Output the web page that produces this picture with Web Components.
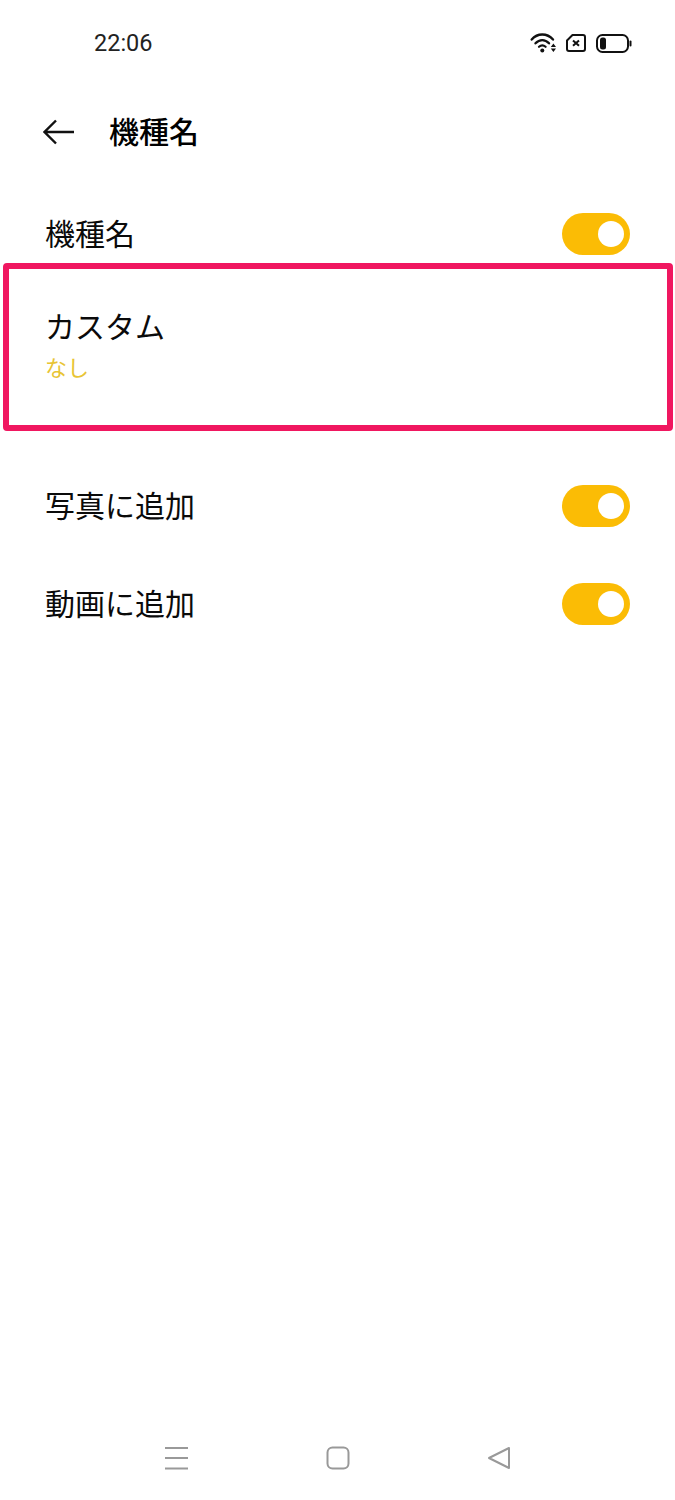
<!DOCTYPE html>
<html lang="ja">
<head>
<meta charset="utf-8">
<title>機種名</title>
<style>
    html, body { margin: 0; background: #fff; }
    body { font-family: "Noto Sans CJK JP", "Noto Sans", sans-serif; color: #0a0a0a; }
</style>
</head>
<body>
<settings-page>
    <status-bar slot="top" time="22:06"></status-bar>
    <title-bar slot="top">機種名</title-bar>
    <setting-row style="margin-top:35px">機種名</setting-row>
    <custom-box style="margin-top:8px" label="カスタム" value="なし"></custom-box>
    <setting-row style="margin-top:54px">写真に追加</setting-row>
    <setting-row style="margin-top:56px">動画に追加</setting-row>
    <nav-bar slot="bottom"></nav-bar>
</settings-page>

<script>
class SettingsPage extends HTMLElement {
    constructor() {
        super();
        this.attachShadow({mode: "open"});
        this.shadowRoot.innerHTML = `
            <style>
                :host { display: flex; flex-direction: column; height: 1500px; overflow: hidden; background: #fff; }
                main { flex: 1; display: flex; flex-direction: column; }
            </style>
            <slot name="top"></slot>
            <main><slot></slot></main>
            <slot name="bottom"></slot>
        `;
    }
}

class StatusBar extends HTMLElement {
    constructor() {
        super();
        this.attachShadow({mode: "open"});
    }

    connectedCallback() {
        this.shadowRoot.innerHTML = `
            <style>
                :host { display: flex; align-items: center; justify-content: space-between; height: 86px; padding: 0 43px 0 94px; }
                span { font: 400 23.5px "Roboto", sans-serif; color: #222; }
                div { display: flex; align-items: center; gap: 10px; }
                svg { display: block; }
            </style>
            <span>${this.getAttribute('time')}</span>
            <div>
                <svg width="26" height="20" viewBox="0 0 26 20" fill="none" stroke="#111" stroke-linecap="round">
                    <path d="M1.7 6.5C7.5 -0.2 17 -0.2 23 6.5" stroke-width="2.4"/>
                    <path d="M5.5 10.3C9.5 6 15 6 19 10.3" stroke-width="2.4"/>
                    <path d="M9 13.8c2-1.8 4.6-1.8 6.6 0" stroke-width="2.2"/>
                    <circle cx="12.3" cy="17.5" r="2" fill="#111" stroke="none"/>
                    <path d="M20.8 14l2.6-3.5 2.6 3.5zM20.8 15.5l2.6 3.5 2.6-3.5z" fill="#111" stroke="none"/>
                </svg>
                <svg width="20" height="18" viewBox="0 0 20 18" fill="none" stroke="#111">
                    <path d="M6.5 1H17a2 2 0 0 1 2 2V15a2 2 0 0 1-2 2H3a2 2 0 0 1-2-2V6.5z" stroke-width="2" stroke-linejoin="round"/>
                    <path d="M7 6.4l6 5.4M13 6.4l-6 5.4" stroke-width="2"/>
                </svg>
                <svg width="36" height="19" viewBox="0 0 36 19" fill="none">
                    <rect x="1" y="1" width="31" height="17" rx="5.5" stroke="#111" stroke-width="2"/>
                    <rect x="4" y="3.5" width="6" height="12" rx="2.5" fill="#111"/>
                    <rect x="33.5" y="6.5" width="2" height="6" rx="1" fill="#111"/>
                </svg>
            </div>
        `;
    }
}

class TitleBar extends HTMLElement {
    constructor() {
        super();
        this.attachShadow({mode: "open"});
        this.shadowRoot.innerHTML = `
            <style>
                :host { display: flex; align-items: center; height: 92px; padding-left: 43px; gap: 34px; font-size: 30px; font-weight: 500; line-height: 40px; color: #000; }
                svg { display: block; }
                .text { margin-top: -4px; }
            </style>
            <svg width="32" height="26" viewBox="0 0 32 26" fill="none" stroke="#111" stroke-width="2.4">
                <path d="M1.5 13H31M13 1.5L1.5 13L13 24.5"/>
            </svg>
            <div class="text"><slot></slot></div>
        `;
    }
}

class SettingRow extends HTMLElement {
    constructor() {
        super();
        this.attachShadow({mode: "open"});
        this.shadowRoot.innerHTML = `
            <style>
                :host { display: flex; align-items: center; justify-content: space-between; height: 42px; padding: 0 45px; font-size: 30px; line-height: 42px; color: #0a0a0a; }
                .text { margin-top: -5px; }
            </style>
            <div class="text"><slot></slot></div>
            <toggle-switch></toggle-switch>
        `;
    }
}

class ToggleSwitch extends HTMLElement {
    constructor() {
        super();
        this.attachShadow({mode: "open"});
        this.shadowRoot.innerHTML = `
            <style>
                :host { display: flex; align-items: center; justify-content: flex-end; box-sizing: border-box; width: 68px; height: 42px; padding-right: 6px; border-radius: 21px; background: #fbbc05; }
                i { width: 26px; height: 26px; border-radius: 50%; background: #fff; }
            </style>
            <i></i>
        `;
    }
}

class CustomBox extends HTMLElement {
    constructor() {
        super();
        this.attachShadow({mode: "open"});
    }

    connectedCallback() {
        this.shadowRoot.innerHTML = `
            <style>
                :host { display: block; box-sizing: border-box; height: 168px; margin: 0 2px 0 3px; padding: 35px 0 0 36px; border: 6px solid #f01760; border-radius: 4px; }
                .label { font-size: 30px; line-height: 42px; color: #0a0a0a; }
                .value { margin-top: 5px; font-size: 22px; line-height: 30px; color: #e8c434; }
            </style>
            <div class="label">${this.getAttribute('label')}</div>
            <div class="value">${this.getAttribute('value')}</div>
        `;
    }
}

class NavBar extends HTMLElement {
    constructor() {
        super();
        this.attachShadow({mode: "open"});
        this.shadowRoot.innerHTML = `
            <style>
                :host { display: flex; align-items: center; justify-content: space-between; height: 24px; margin-bottom: 30px; padding: 0 164px; }
                svg { display: block; }
            </style>
            <svg width="25" height="24" viewBox="0 0 25 24" fill="none" stroke="#999" stroke-width="2">
                <path d="M1 2H24M1 12H24M1 22.5H24"/>
            </svg>
            <svg width="24" height="24" viewBox="0 0 24 24" fill="none" stroke="#999" stroke-width="2">
                <rect x="1.5" y="1.5" width="21" height="21" rx="5"/>
            </svg>
            <svg width="24" height="24" viewBox="0 0 24 24" fill="none" stroke="#999" stroke-width="2" stroke-linejoin="round">
                <path d="M22 2V22L2 12Z"/>
            </svg>
        `;
    }
}

customElements.define('settings-page', SettingsPage);
customElements.define('status-bar', StatusBar);
customElements.define('title-bar', TitleBar);
customElements.define('setting-row', SettingRow);
customElements.define('toggle-switch', ToggleSwitch);
customElements.define('custom-box', CustomBox);
customElements.define('nav-bar', NavBar);
</script>
</body>
</html>
